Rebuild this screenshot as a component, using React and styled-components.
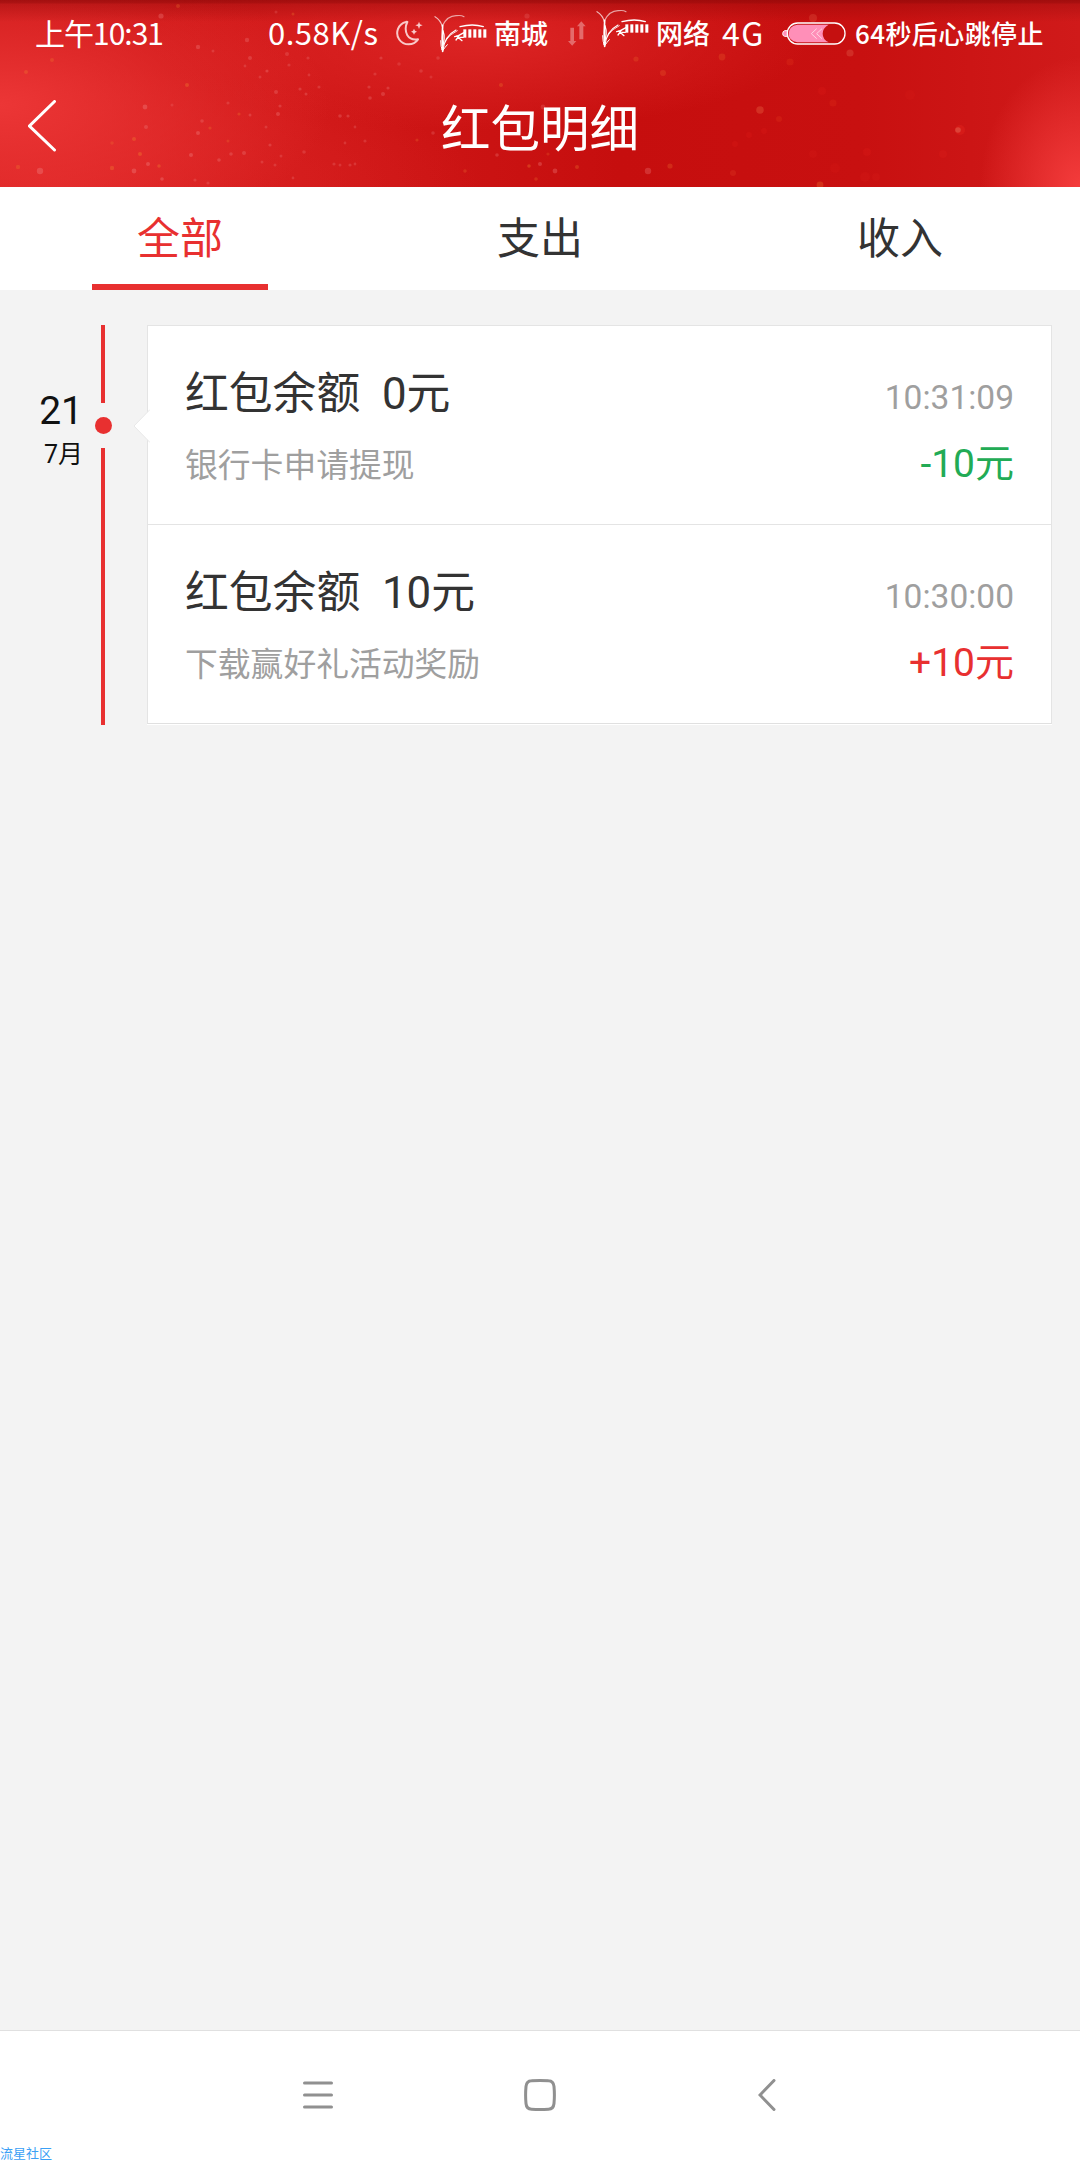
import styled, { createGlobalStyle } from "styled-components";
import { useState } from "react";

const data = {
  tabs: ["全部", "支出", "收入"],
  day: "21",
  month: "7月",
  records: [
    {
      title: "红包余额  0元",
      time: "10:31:09",
      note: "银行卡申请提现",
      amount: "-10元",
    },
    {
      title: "红包余额  10元",
      time: "10:30:00",
      note: "下载赢好礼活动奖励",
      amount: "+10元",
    },
  ],
};

// x, y, radius, colour, opacity
const sparkles = [
  [161, 16, 2.6, "#f08080", 0.45],
  [178, 6, 2, "#e8702a", 0.4],
  [198, 47, 2.2, "#f08080", 0.45],
  [213, 51, 1.5, "#f08080", 0.35],
  [247, 40, 2.2, "#f08080", 0.4],
  [250, 58, 2, "#f08080", 0.4],
  [245, 66, 1.4, "#f08080", 0.35],
  [267, 71, 1.6, "#f08080", 0.45],
  [260, 77, 1.5, "#f08080", 0.35],
  [187, 85, 2, "#f07a30", 0.5],
  [276, 12, 1.5, "#f08080", 0.3],
  [293, 14, 1.5, "#f07a30", 0.4],
  [287, 54, 2, "#f08080", 0.35],
  [308, 58, 1.6, "#f08080", 0.35],
  [289, 65, 1.6, "#f08080", 0.35],
  [309, 75, 1.4, "#f08080", 0.35],
  [52, 60, 2, "#f07a30", 0.4],
  [26, 72, 2, "#f07a30", 0.45],
  [145, 107, 2.4, "#f08080", 0.5],
  [146, 127, 2, "#f08080", 0.4],
  [172, 105, 1.5, "#f08080", 0.3],
  [134, 139, 2, "#f07a30", 0.5],
  [112, 143, 1.8, "#f07a30", 0.35],
  [140, 154, 2, "#f07a30", 0.55],
  [148, 164, 2, "#f08080", 0.5],
  [159, 166, 1.8, "#f07a30", 0.5],
  [112, 168, 2.2, "#f07a30", 0.5],
  [134, 171, 2.4, "#f08080", 0.5],
  [162, 179, 1.8, "#f08080", 0.5],
  [40, 171, 3.2, "#f08080", 0.5],
  [18, 167, 2.2, "#f07a30", 0.4],
  [191, 155, 2, "#f08080", 0.5],
  [198, 133, 2, "#f08080", 0.5],
  [202, 121, 1.8, "#f08080", 0.4],
  [210, 128, 1.6, "#f07a30", 0.4],
  [219, 160, 1.8, "#f08080", 0.45],
  [231, 154, 1.8, "#f08080", 0.4],
  [244, 153, 2, "#f08080", 0.4],
  [228, 141, 1.5, "#f07a30", 0.35],
  [239, 114, 1.6, "#f07a30", 0.4],
  [228, 103, 1.6, "#f08080", 0.35],
  [250, 115, 1.5, "#f08080", 0.4],
  [276, 92, 2, "#f08080", 0.4],
  [280, 106, 1.6, "#f08080", 0.4],
  [278, 114, 2, "#f08080", 0.45],
  [266, 127, 1.5, "#f08080", 0.35],
  [270, 145, 1.6, "#f08080", 0.4],
  [262, 162, 1.5, "#f08080", 0.35],
  [281, 156, 1.5, "#f08080", 0.35],
  [275, 165, 1.5, "#f08080", 0.35],
  [300, 89, 1.6, "#f08080", 0.4],
  [306, 94, 1.5, "#f08080", 0.4],
  [319, 87, 1.6, "#f08080", 0.35],
  [340, 116, 1.8, "#f08080", 0.4],
  [348, 116, 1.6, "#f08080", 0.4],
  [355, 127, 1.4, "#f08080", 0.35],
  [369, 87, 1.6, "#f08080", 0.4],
  [370, 98, 1.8, "#f08080", 0.4],
  [383, 94, 2, "#f08080", 0.4],
  [388, 88, 1.6, "#f08080", 0.4],
  [375, 74, 1.6, "#f08080", 0.35],
  [381, 58, 1.6, "#f08080", 0.4],
  [304, 152, 1.8, "#f08080", 0.35],
  [334, 164, 1.6, "#f08080", 0.35],
  [340, 165, 1.5, "#f08080", 0.35],
  [350, 165, 1.6, "#f08080", 0.35],
  [355, 164, 1.4, "#f08080", 0.35],
  [365, 141, 1.6, "#f08080", 0.35],
  [345, 143, 1.4, "#f08080", 0.35],
  [293, 178, 1.4, "#f08080", 0.35],
  [195, 180, 1.6, "#f08080", 0.35],
  [208, 183, 1.6, "#f08080", 0.35],
  [399, 64, 1.8, "#f08080", 0.3],
  [421, 71, 1.8, "#f08080", 0.35],
  [438, 58, 1.8, "#f08080", 0.35],
  [431, 77, 1.5, "#f08080", 0.3],
  [527, 16, 2.6, "#f08080", 0.3],
  [501, 85, 2, "#f07a30", 0.4],
  [543, 107, 2.4, "#f08080", 0.3],
  [433, 133, 1.8, "#f08080", 0.35],
  [443, 146, 1.5, "#f08080", 0.35],
  [417, 140, 1.6, "#f07a30", 0.35],
  [497, 155, 1.8, "#f08080", 0.4],
  [465, 171, 1.8, "#f07a30", 0.35],
  [529, 166, 1.8, "#f07a30", 0.5],
  [540, 164, 2, "#f08080", 0.45],
  [555, 171, 2.4, "#f08080", 0.45],
  [548, 154, 1.6, "#f07a30", 0.3],
  [536, 179, 1.8, "#f07a30", 0.35],
  [577, 167, 2, "#f07a30", 0.4],
  [648, 171, 3.2, "#f08080", 0.4],
  [670, 166, 2.6, "#f07a30", 0.35],
  [636, 59, 2.6, "#f07a30", 0.3],
  [663, 73, 3, "#f07a30", 0.3],
  [722, 57, 3.4, "#f07a30", 0.3],
  [790, 62, 3.6, "#f04a20", 0.25],
  [813, 18, 4, "#f08060", 0.28],
  [850, 53, 3.6, "#f09070", 0.3],
  [760, 110, 3.8, "#f07a50", 0.4],
  [779, 119, 3, "#f04a20", 0.25],
  [833, 103, 3.6, "#f04a20", 0.22],
  [822, 91, 4, "#f02a20", 0.2],
  [764, 131, 3, "#f02a20", 0.2],
  [749, 135, 3, "#f02a20", 0.2],
  [735, 144, 3, "#f02a20", 0.2],
  [867, 152, 4, "#f02a20", 0.2],
  [943, 154, 4, "#f02a20", 0.2],
  [960, 130, 5, "#f02a20", 0.4],
  [958, 130, 2.8, "#f0a080", 0.4],
  [733, 173, 3, "#f05a30", 0.25],
  [820, 185, 3.4, "#f07a30", 0.4],
  [910, 95, 5, "#f02a20", 0.12],
  [865, 177, 5, "#f02a20", 0.15],
  [876, 177, 4, "#f02a20", 0.15],
  [813, 154, 4, "#f02a20", 0.15],
  [835, 168, 5, "#f02a20", 0.12],
];

function Plant() {
  return (
    <svg width="53" height="39" viewBox="0 0 159 117" fill="none">
      <g stroke="#fff" strokeLinecap="round">
        <path d="M3 8Q20 18 25 38" strokeWidth="3.5" opacity=".7" />
        <path d="M25 36Q40 4 68 5Q82 3 90 8" strokeWidth="3.5" opacity=".6" />
        <path d="M26 34Q23 70 26 112" strokeWidth="5" />
        <path d="M27 50Q35 72 24 106" strokeWidth="4" />
        <path d="M27 108Q32 66 66 48" strokeWidth="3.5" />
        <path d="M78 38Q116 28 148 38" strokeWidth="4" />
        <path d="M36 78Q46 62 70 50" strokeWidth="3" opacity=".8" />
        <path d="M20 80Q20 100 26 110Q34 98 40 92" strokeWidth="3" />
        <path d="M62 68Q74 66 90 56M68 66L84 80M76 64L66 78M78 70H88" strokeWidth="4" />
      </g>
      <g fill="#fff">
        {[88, 103, 118, 133, 148].map((x) => (
          <rect key={x} x={x} y="46" width="9" height="25" />
        ))}
      </g>
    </svg>
  );
}

function Moon() {
  return (
    <svg width="27" height="26" viewBox="0 0 81 78">
      <path
        d="M30 6A34 34 0 1 0 66 58Q44 62 34 46Q24 26 34 6Q32 5 30 6Z"
        fill="none"
        stroke="#f9c9c9"
        strokeWidth="6"
        strokeLinejoin="round"
      />
      <path d="M69 5L72 13L80 16L72 19L69 27L66 19L58 16L66 13Z" fill="#f9c9c9" />
      <path d="M54 26L57 32L63 35L57 38L54 44L51 38L45 35L51 32Z" fill="#f9c9c9" />
    </svg>
  );
}

function Arrows() {
  return (
    <svg width="18" height="25" viewBox="0 0 54 75" fill="#e46a6a">
      <path d="M7 20H18V60H25L12.500 74L0 60H7Z" />
      <path d="M34 55H46V16H53L40 1L27 16H34Z" />
    </svg>
  );
}

function Battery() {
  return (
    <svg width="64" height="23" viewBox="0 0 192 69">
      <path
        d="M20 26H8Q2 28 2 35Q2 42 8 43H20"
        fill="#ff8fb8"
        stroke="#fff"
        strokeWidth="3"
      />
      <rect x="16" y="3" width="173" height="63" rx="31" fill="#c51010" stroke="#fff" strokeWidth="4" />
      <path
        d="M46 8H140Q122 18 122 35Q122 52 140 61H46Q20 56 20 35Q20 12 46 8Z"
        fill="#ff8fb8"
      />
      <path
        d="M104 20L88 35L104 50M120 20L104 35L120 50"
        fill="none"
        stroke="#ffd6e4"
        strokeWidth="3"
      />
    </svg>
  );
}

export default function App() {
  const [active, setActive] = useState(0);

  return (
    <>
      <GlobalStyle />
      <Screen>
        <Header>
          <Backdrop width="1080" height="187">
            {sparkles.map(([x, y, r, fill, opacity], i) => (
              <circle key={i} cx={x} cy={y} r={r} fill={fill} opacity={opacity * 0.75} />
            ))}
          </Backdrop>

          {/* system status */}
          <StatusBar>
            <StatusText $width={233} $size={30} $spacing={-1} $lift={1}>
              上午10:31
            </StatusText>
            <StatusText $width={128} $size={31} $spacing={0.5} $lift={1}>
              0.58K/s
            </StatusText>
            <StatusIcon $width={38}>
              <Moon />
            </StatusIcon>
            <StatusIcon $width={60}>
              <Plant />
            </StatusIcon>
            <StatusText $width={74} $size={27} $weight={500}>
              南城
            </StatusText>
            <StatusIcon $width={28}>
              <Arrows />
            </StatusIcon>
            <StatusIcon $width={60} $lift={5}>
              <Plant />
            </StatusIcon>
            <StatusText $width={66} $size={27} $weight={500}>
              网络
            </StatusText>
            <StatusText $width={60} $size={32} $spacing={1.5} $lift={1}>
              4G
            </StatusText>
            <StatusIcon $width={73}>
              <Battery />
            </StatusIcon>
            <StatusText $width={200} $size={26} $weight={500} $spacing={0.4}>
              64秒后心跳停止
            </StatusText>
          </StatusBar>

          <TitleBar>
            <BackButton aria-label="返回">
              <svg width="30" height="54" viewBox="0 0 30 54" fill="none">
                <path d="M26.500 1.500L1.500 26L26.500 50" stroke="#fff" strokeWidth="3" strokeLinecap="round" />
              </svg>
            </BackButton>
            <Title>红包明细</Title>
          </TitleBar>
        </Header>

        <Tabs>
          {data.tabs.map((tab, i) => (
            <Tab key={tab} $active={i === active} onClick={() => setActive(i)}>
              {tab}
            </Tab>
          ))}
        </Tabs>

        <Timeline>
          <DateLabel>
            <Day>{data.day}</Day>
            <Month>{data.month}</Month>
          </DateLabel>
          <Rail>
            <Line $height={78} />
            <Dot />
            <Line $height={277} />
          </Rail>
          <Card>
            <Notch width="17" height="34" viewBox="0 0 17 34">
              <path d="M17 0.500L1 17L17 33.500" fill="#fff" stroke="#e8e8e8" />
            </Notch>
            {data.records.map((record) => (
              <Record key={record.time}>
                <RecordTitle>{record.title}</RecordTitle>
                <Time>{record.time}</Time>
                <Note>{record.note}</Note>
                <Amount $income={record.amount.startsWith("+")}>
                  {record.amount}
                </Amount>
              </Record>
            ))}
          </Card>
        </Timeline>

        <NavBar>
          <svg width="30" height="32" viewBox="0 0 30 32">
            <path d="M1.500 4H28.500M1.500 16H28.500M1.500 28H28.500" stroke="#909090" strokeWidth="3" strokeLinecap="round" />
          </svg>
          <svg width="32" height="32" viewBox="0 0 32 32" fill="none">
            <path
              d="M7.500 1.800Q16 1.200 24.500 1.800Q29.500 2 30 7.500Q30.800 16 30 24.500Q29.500 30 24.500 30.200Q16 30.800 7.500 30.200Q2.500 30 2 24.500Q1.200 16 2 7.500Q2.500 2 7.500 1.800Z"
              stroke="#909090"
              strokeWidth="3"
            />
          </svg>
          <svg width="18" height="32" viewBox="0 0 18 32" fill="none">
            <path d="M16 1.500L2 16L16 30.500" stroke="#909090" strokeWidth="3" strokeLinecap="round" />
          </svg>
        </NavBar>
        <Watermark>流星社区</Watermark>
      </Screen>
    </>
  );
}

const GlobalStyle = createGlobalStyle`
  * {
    box-sizing: border-box;
  }
  body {
    margin: 0;
    background: #f3f3f3;
    font-family: Roboto, "Noto Sans CJK SC", sans-serif;
  }
  svg {
    display: block;
    flex: none;
  }
`;

const Screen = styled.div`
  position: relative;
  display: flex;
  flex-direction: column;
  width: 1080px;
  height: 2160px;
  overflow: hidden;
  background: #f3f3f3;
`;

const Header = styled.header`
  position: relative;
  height: 187px;
  color: #fff;
  background:
    linear-gradient(#8c0808b0 0, #8c080890 3px, #8c080858 4px, #8c080800 22px),
    radial-gradient(ellipse 100px 130px at 1080px 187px, #f43c3c, #f43c3c00),
    radial-gradient(ellipse 330px 150px at 0 105px, #ec3636, #ec363600),
    radial-gradient(ellipse 330px 90px at 480px 40px, #dc2424, #dc242400),
    radial-gradient(ellipse 420px 120px at 60px 187px, #dc2424, #dc242400),
    linear-gradient(90deg, #cc1717 0, #d01818 300px, #c60e0e 620px, #c81010 860px, #d01a1a 1080px);
`;

const Backdrop = styled.svg`
  position: absolute;
  inset: 0;
`;

const StatusBar = styled.div`
  position: relative;
  display: flex;
  align-items: center;
  height: 66px;
  padding-left: 35px;
  font-family: "Noto Sans CJK SC", sans-serif;
`;

const StatusText = styled.span`
  flex: none;
  width: ${({ $width }) => $width}px;
  padding-bottom: ${({ $lift }) => ($lift || 0) * 2}px;
  font-size: ${({ $size }) => $size}px;
  font-weight: ${({ $weight }) => $weight || 400};
  letter-spacing: ${({ $spacing }) => $spacing || 0}px;
  line-height: 40px;
  white-space: nowrap;
`;

const StatusIcon = styled.span`
  flex: none;
  width: ${({ $width }) => $width}px;
  padding-bottom: ${({ $lift }) => ($lift || 0) * 2}px;
`;

const TitleBar = styled.div`
  position: relative;
  display: grid;
  grid-template-columns: 120px 1fr 120px;
  align-items: center;
  height: 121px;
`;

const BackButton = styled.button`
  padding: 0 0 0 28px;
  border: 0;
  background: none;
`;

const Title = styled.h1`
  margin: 0;
  padding-top: 6px;
  font-size: 49.5px;
  font-weight: 400;
  line-height: 70px;
  text-align: center;
`;

const Tabs = styled.nav`
  display: grid;
  grid-template-columns: repeat(3, 1fr);
  height: 103px;
  background: #fff;
`;

const Tab = styled.button`
  width: 176px;
  height: 103px;
  margin: 0 auto;
  padding: 0 0 2px;
  border: 0;
  border-bottom: 6px solid ${({ $active }) => ($active ? "#e83030" : "transparent")};
  background: none;
  color: ${({ $active }) => ($active ? "#e83030" : "#333")};
  font-family: inherit;
  font-size: 43px;
`;

const Timeline = styled.main`
  display: grid;
  grid-template-columns: 83px 44px 905px;
  column-gap: 10px;
  align-items: start;
  padding-top: 35px;
`;

const DateLabel = styled.div`
  display: flex;
  flex-direction: column;
  align-items: flex-end;
  padding-top: 63px;
  color: #111;
`;

const Day = styled.strong`
  font-size: 39px;
  font-weight: 400;
  line-height: 46px;
`;

const Month = styled.span`
  padding-top: 4px;
  font-size: 25px;
  line-height: 34px;
`;

const Rail = styled.div`
  padding-left: 2px;
`;

const Line = styled.div`
  width: 4px;
  height: ${({ $height }) => $height}px;
  margin-left: 6px;
  background: #e83030;
`;

const Dot = styled.div`
  width: 17px;
  height: 17px;
  margin: 14px 0;
  border-radius: 50%;
  background: #e83030;
`;

const Card = styled.section`
  position: relative;
  border: 1px solid #e4e4e4;
  border-bottom-color: #e0e0e0;
  background: #fff;
  box-shadow: 0 1px #fff;
`;

const Notch = styled.svg`
  position: absolute;
  top: 83px;
  left: -15px;
`;

const Record = styled.article`
  display: grid;
  grid-template-columns: 1fr auto;
  grid-template-rows: 60px 60px;
  align-items: baseline;
  height: 198px;
  padding: 38px 37px 0;

  & + & {
    height: 199px;
    border-top: 1px solid #e4e4e4;
  }
`;

const RecordTitle = styled.h2`
  margin: 0;
  color: #333;
  font-size: 43.8px;
  font-weight: 400;
  line-height: 60px;
  white-space: pre;
`;

const Time = styled.time`
  color: #9f9f9f;
  font-size: 33.5px;
  text-align: right;
`;

const Note = styled.p`
  margin: 0;
  color: #9f9f9f;
  font-size: 32.8px;
  line-height: 85px;
`;

const Amount = styled.span`
  color: ${({ $income }) => ($income ? "#e83030" : "#22ab55")};
  font-size: 39px;
  text-align: right;
`;

const NavBar = styled.footer`
  display: grid;
  grid-template-columns: 221px 234px 18px;
  align-items: start;
  height: 130px;
  margin-top: auto;
  padding: 48px 0 0 303px;
  border-top: 1px solid #e0e0e0;
  background: #fff;
`;

const Watermark = styled.small`
  position: absolute;
  bottom: 0;
  left: 0;
  color: #3ba0f5;
  font-size: 13px;
  line-height: 13px;
`;
